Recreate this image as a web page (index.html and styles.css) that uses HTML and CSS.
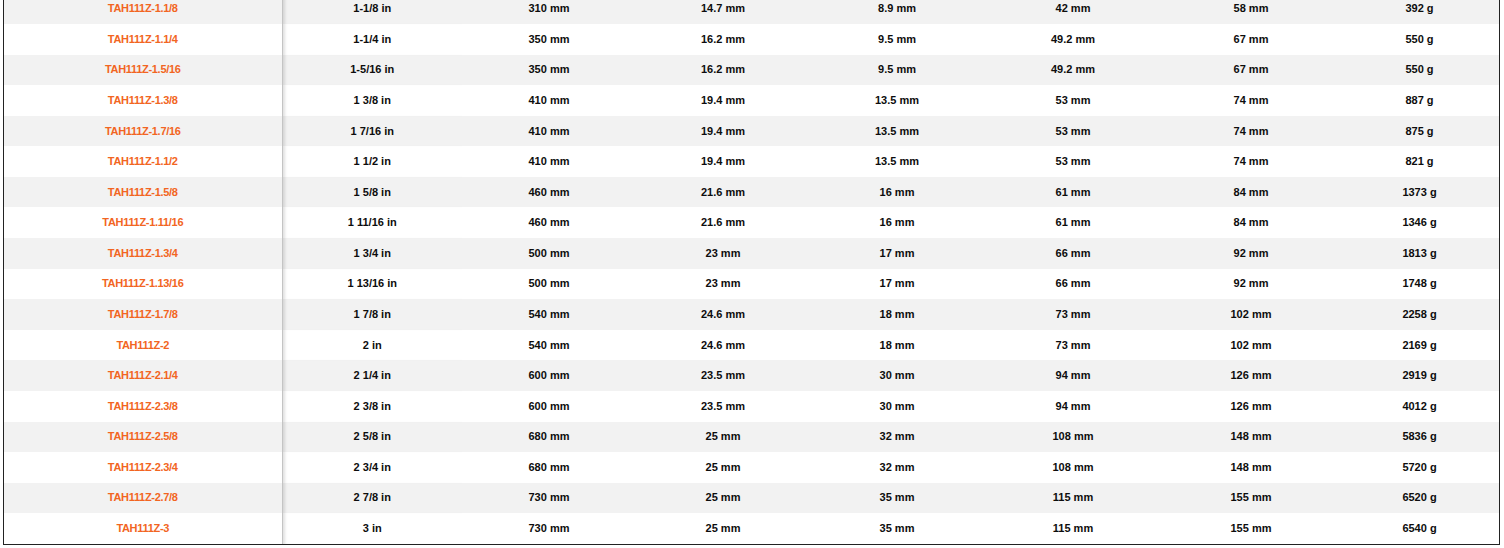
FILE: index.html
```html
<!DOCTYPE html>
<html>
<head>
<meta charset="utf-8">
<link rel="stylesheet" href="styles.css">
</head>
<body>
<div class="wrap">
<table class="specs">
<colgroup>
<col class="c1"><col class="c2"><col class="c3"><col class="c4"><col class="c5"><col class="c6"><col class="c7"><col class="c8">
</colgroup>
<tbody>
<tr><td class="ref">TAH111Z-1.1/8</td><td class="sz">1-1/8 in</td><td>310 mm</td><td>14.7 mm</td><td>8.9 mm</td><td>42 mm</td><td>58 mm</td><td>392 g</td></tr>
<tr><td class="ref">TAH111Z-1.1/4</td><td class="sz">1-1/4 in</td><td>350 mm</td><td>16.2 mm</td><td>9.5 mm</td><td>49.2 mm</td><td>67 mm</td><td>550 g</td></tr>
<tr><td class="ref">TAH111Z-1.5/16</td><td class="sz">1-5/16 in</td><td>350 mm</td><td>16.2 mm</td><td>9.5 mm</td><td>49.2 mm</td><td>67 mm</td><td>550 g</td></tr>
<tr><td class="ref">TAH111Z-1.3/8</td><td class="sz">1 3/8 in</td><td>410 mm</td><td>19.4 mm</td><td>13.5 mm</td><td>53 mm</td><td>74 mm</td><td>887 g</td></tr>
<tr><td class="ref">TAH111Z-1.7/16</td><td class="sz">1 7/16 in</td><td>410 mm</td><td>19.4 mm</td><td>13.5 mm</td><td>53 mm</td><td>74 mm</td><td>875 g</td></tr>
<tr><td class="ref">TAH111Z-1.1/2</td><td class="sz">1 1/2 in</td><td>410 mm</td><td>19.4 mm</td><td>13.5 mm</td><td>53 mm</td><td>74 mm</td><td>821 g</td></tr>
<tr><td class="ref">TAH111Z-1.5/8</td><td class="sz">1 5/8 in</td><td>460 mm</td><td>21.6 mm</td><td>16 mm</td><td>61 mm</td><td>84 mm</td><td>1373 g</td></tr>
<tr><td class="ref">TAH111Z-1.11/16</td><td class="sz">1 11/16 in</td><td>460 mm</td><td>21.6 mm</td><td>16 mm</td><td>61 mm</td><td>84 mm</td><td>1346 g</td></tr>
<tr><td class="ref">TAH111Z-1.3/4</td><td class="sz">1 3/4 in</td><td>500 mm</td><td>23 mm</td><td>17 mm</td><td>66 mm</td><td>92 mm</td><td>1813 g</td></tr>
<tr><td class="ref">TAH111Z-1.13/16</td><td class="sz">1 13/16 in</td><td>500 mm</td><td>23 mm</td><td>17 mm</td><td>66 mm</td><td>92 mm</td><td>1748 g</td></tr>
<tr><td class="ref">TAH111Z-1.7/8</td><td class="sz">1 7/8 in</td><td>540 mm</td><td>24.6 mm</td><td>18 mm</td><td>73 mm</td><td>102 mm</td><td>2258 g</td></tr>
<tr><td class="ref">TAH111Z-2</td><td class="sz">2 in</td><td>540 mm</td><td>24.6 mm</td><td>18 mm</td><td>73 mm</td><td>102 mm</td><td>2169 g</td></tr>
<tr><td class="ref">TAH111Z-2.1/4</td><td class="sz">2 1/4 in</td><td>600 mm</td><td>23.5 mm</td><td>30 mm</td><td>94 mm</td><td>126 mm</td><td>2919 g</td></tr>
<tr><td class="ref">TAH111Z-2.3/8</td><td class="sz">2 3/8 in</td><td>600 mm</td><td>23.5 mm</td><td>30 mm</td><td>94 mm</td><td>126 mm</td><td>4012 g</td></tr>
<tr><td class="ref">TAH111Z-2.5/8</td><td class="sz">2 5/8 in</td><td>680 mm</td><td>25 mm</td><td>32 mm</td><td>108 mm</td><td>148 mm</td><td>5836 g</td></tr>
<tr><td class="ref">TAH111Z-2.3/4</td><td class="sz">2 3/4 in</td><td>680 mm</td><td>25 mm</td><td>32 mm</td><td>108 mm</td><td>148 mm</td><td>5720 g</td></tr>
<tr><td class="ref">TAH111Z-2.7/8</td><td class="sz">2 7/8 in</td><td>730 mm</td><td>25 mm</td><td>35 mm</td><td>115 mm</td><td>155 mm</td><td>6520 g</td></tr>
<tr><td class="ref">TAH111Z-3</td><td class="sz">3 in</td><td>730 mm</td><td>25 mm</td><td>35 mm</td><td>115 mm</td><td>155 mm</td><td>6540 g</td></tr>
</tbody>
</table>
</div>
</body>
</html>
```
FILE: styles.css
```css
html, body {
  margin: 0;
  padding: 0;
  background: #ffffff;
}

.wrap {
  margin: -6.6px 4px 0 3px;
  border: 1px solid #222222;
  border-top: none;
}

.specs {
  width: 100%;
  border-collapse: collapse;
  table-layout: fixed;
  font-family: "Liberation Sans", Arial, sans-serif;
  font-size: 11px;
  font-weight: bold;
  color: #0d0d0d;
}

.c1 { width: 278px; }
.c2 { width: 180px; }
.c3 { width: 174px; }
.c4 { width: 174px; }
.c5 { width: 174px; }
.c6 { width: 178px; }
.c7 { width: 178px; }
.c8 { width: 159px; }

.specs tr {
  height: 30.59px;
}

.specs tr:nth-child(odd) {
  background: #f2f2f2;
}

.specs td {
  padding: 0 0 1px 0;
  text-align: center;
  vertical-align: middle;
  white-space: nowrap;
  line-height: 14px;
}

.specs td.ref {
  color: #f26522;
  letter-spacing: -0.3px;
  border-right: 1px solid #c4c4c4;
}

.specs td.sz {
  box-shadow: inset 4px 0 3px -2px rgba(0, 0, 0, 0.12);
}
```
